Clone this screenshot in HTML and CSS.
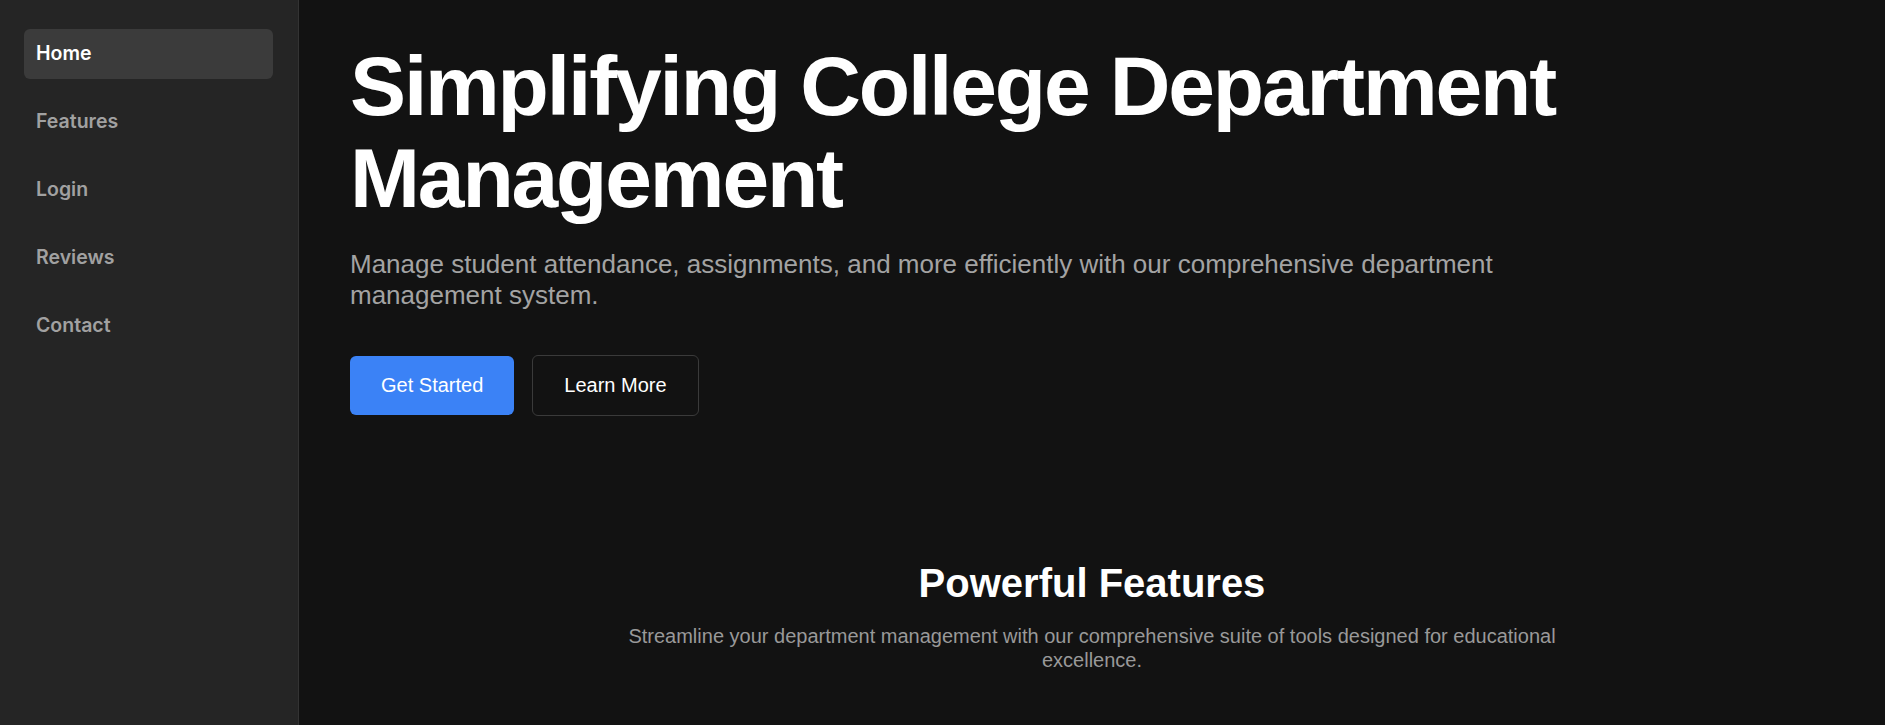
FILE: index.html
```html
<!DOCTYPE html>
<html lang="en">
<head>
<meta charset="utf-8">
<title>Department Management</title>
<link rel="stylesheet" href="styles.css">
</head>
<body>
<div class="layout">
  <aside class="sidebar">
    <nav class="nav">
      <a class="nav-item active" href="#">Home</a>
      <a class="nav-item" href="#">Features</a>
      <a class="nav-item" href="#">Login</a>
      <a class="nav-item" href="#">Reviews</a>
      <a class="nav-item" href="#">Contact</a>
    </nav>
  </aside>
  <main class="main">
    <section class="hero">
      <h1 class="hero-title">Simplifying College Department Management</h1>
      <p class="hero-text">Manage student attendance, assignments, and more efficiently with our comprehensive department management system.</p>
      <div class="hero-actions">
        <a class="btn btn-primary" href="#">Get Started</a>
        <a class="btn btn-outline" href="#">Learn More</a>
      </div>
    </section>
    <section class="features">
      <h2 class="features-title">Powerful Features</h2>
      <p class="features-text">Streamline your department management with our comprehensive suite of tools designed for educational excellence.</p>
    </section>
  </main>
</div>
</body>
</html>
```
FILE: styles.css
```css
* { box-sizing: border-box; }
html, body { margin: 0; padding: 0; }
body {
  background: #121212;
  color: #fff;
  font-family: "Liberation Sans", Arial, sans-serif;
  overflow: hidden;
}
.layout {
  display: flex;
  height: 100vh;
}
.sidebar {
  width: 299px;
  flex-shrink: 0;
  background: #252525;
  border-right: 1px solid #333333;
  padding: 29px 25px 0 24px;
}
.nav {
  display: flex;
  flex-direction: column;
  gap: 18.5px;
}
.nav-item {
  display: block;
  padding: 12px 12px;
  line-height: 25.5px;
  border-radius: 6px;
  font-family: Inter, "Noto Sans", sans-serif;
  font-size: 19.5px;
  font-weight: 600;
  color: #a1a1a1;
  text-decoration: none;
}
.nav-item.active {
  background: #3b3b3b;
  color: #ffffff;
}
.main {
  flex: 1;
  padding: 40px 51px 0 51px;
  overflow: hidden;
}
.hero {
  max-width: 1240px;
}
.hero-title {
  margin: 0;
  font-size: 84px;
  line-height: 1.1;
  font-weight: 700;
  letter-spacing: -2.15px;
  color: #ffffff;
}
.hero-text {
  margin: 24px 0 0 0;
  font-size: 26px;
  line-height: 31px;
  color: #a3a3a3;
}
.hero-actions {
  display: flex;
  align-items: center;
  gap: 18px;
  margin-top: 44px;
}
.btn {
  display: inline-block;
  font-size: 20px;
  line-height: 27px;
  padding: 16px 31px;
  border-radius: 6px;
  text-decoration: none;
  color: #ffffff;
}
.btn-primary {
  background: #3b82f6;
}
.btn-outline {
  border: 1px solid #3a3a3a;
  background: transparent;
}
.features {
  margin-top: 144px;
  display: flex;
  flex-direction: column;
  align-items: center;
  text-align: center;
}
.features-title {
  margin: 0;
  font-size: 40px;
  font-weight: 700;
  line-height: 46px;
}
.features-text {
  margin: 18px 0 0 0;
  max-width: 960px;
  font-size: 20px;
  line-height: 24px;
  color: #999999;
}
```
